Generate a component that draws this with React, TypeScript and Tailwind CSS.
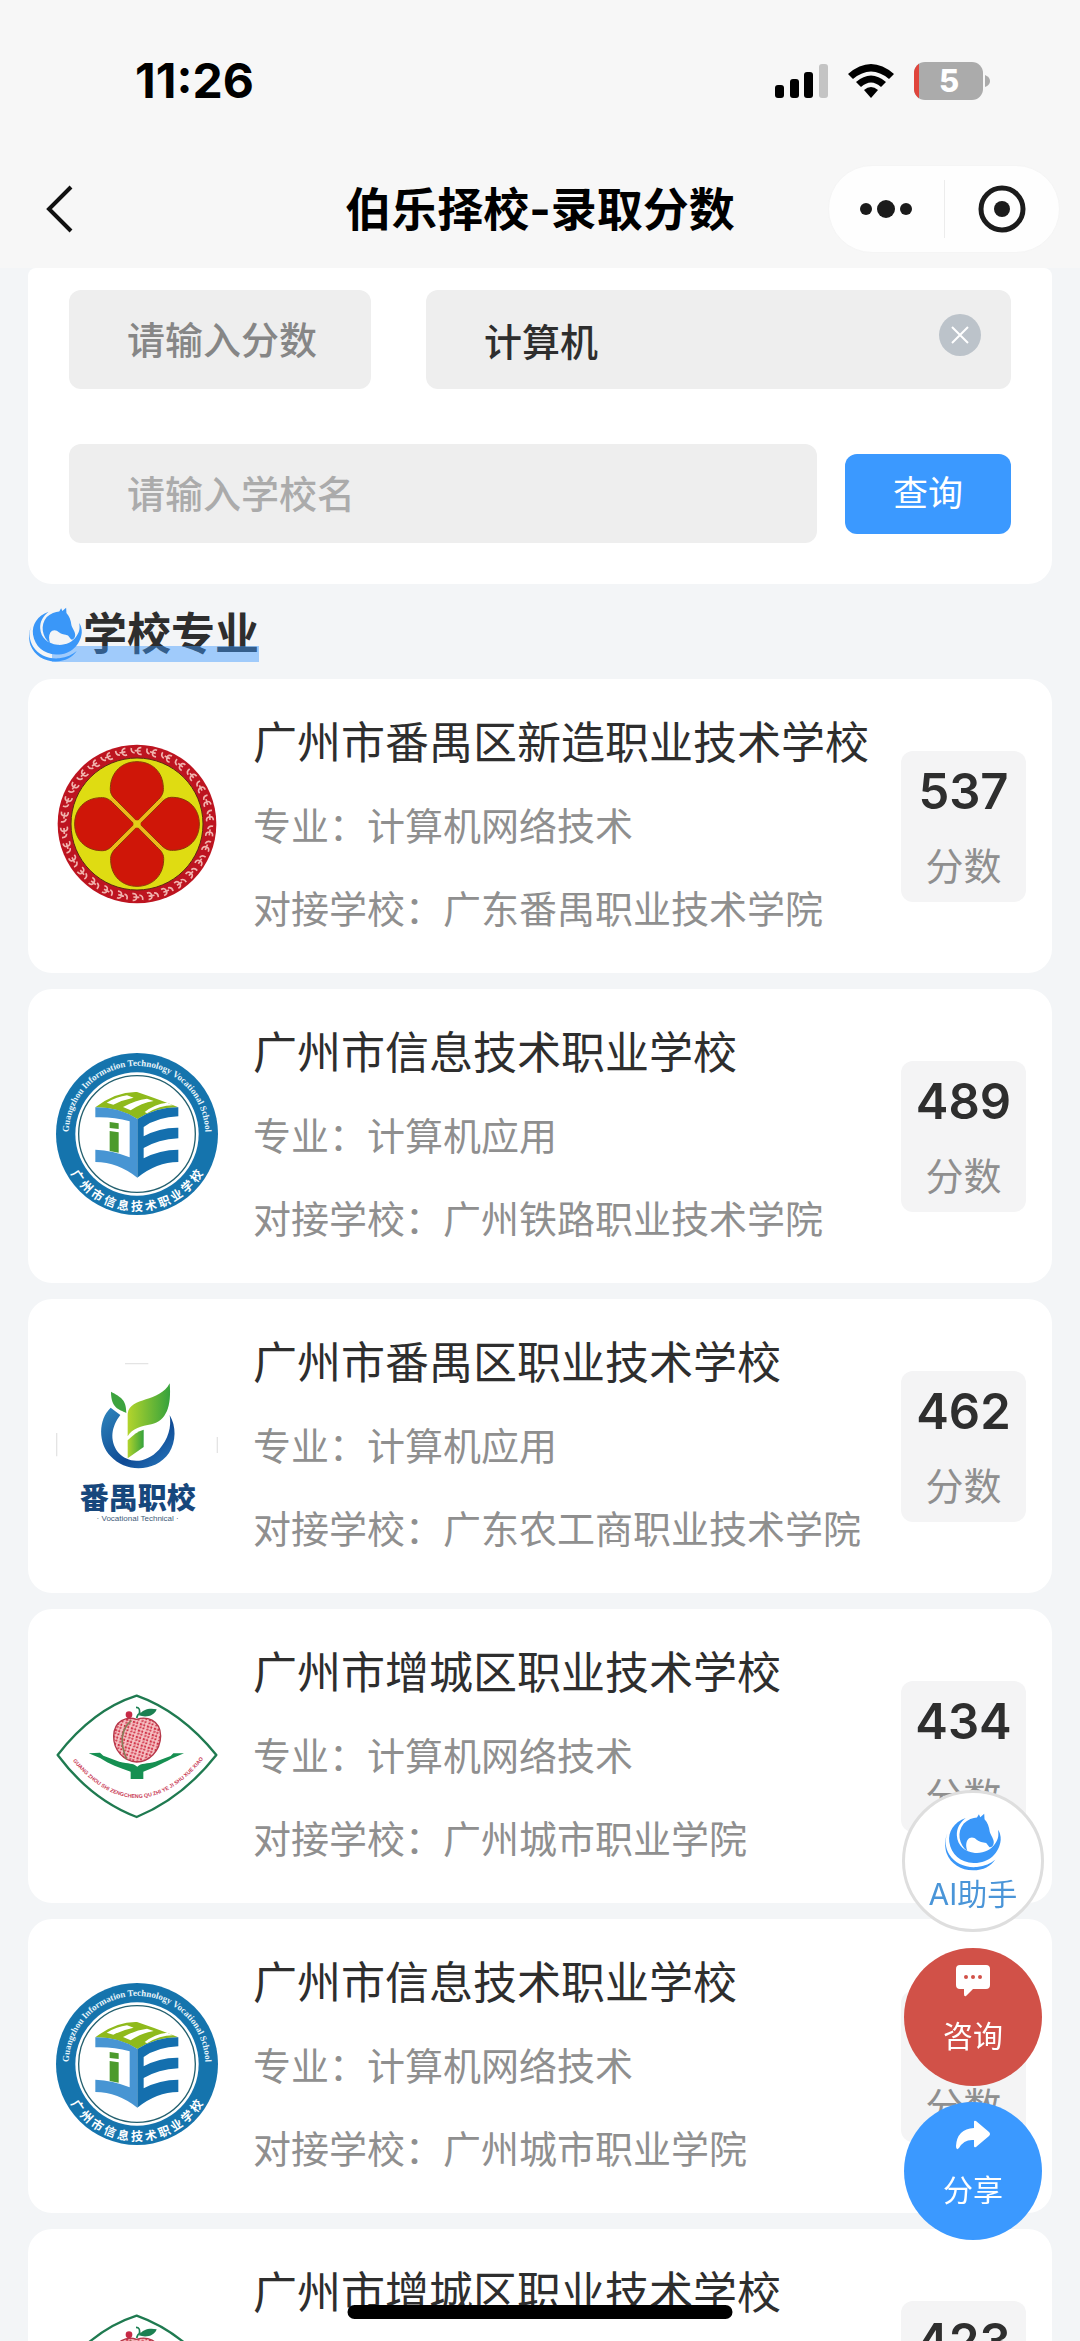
import React from "react";

type LogoKind = "xinzao" | "xinxi" | "panyu" | "zengcheng";

interface School {
  name: string;
  major: string;
  partner: string;
  score: number;
  logo: LogoKind;
}

const schools: School[] = [
  { name: "广州市番禺区新造职业技术学校", major: "计算机网络技术", partner: "广东番禺职业技术学院", score: 537, logo: "xinzao" },
  { name: "广州市信息技术职业学校", major: "计算机应用", partner: "广州铁路职业技术学院", score: 489, logo: "xinxi" },
  { name: "广州市番禺区职业技术学校", major: "计算机应用", partner: "广东农工商职业技术学院", score: 462, logo: "panyu" },
  { name: "广州市增城区职业技术学校", major: "计算机网络技术", partner: "广州城市职业学院", score: 434, logo: "zengcheng" },
  { name: "广州市信息技术职业学校", major: "计算机网络技术", partner: "广州城市职业学院", score: 433, logo: "xinxi" },
  { name: "广州市增城区职业技术学校", major: "计算机网络技术", partner: "广州城市职业学院", score: 423, logo: "zengcheng" },
];

function HorseIcon({ className }: { className: string }) {
  return (
    <svg viewBox="162 90 176 176" className={className} fill="#3a97f8" aria-hidden="true">
      <path d="M228 105C192 118 174 146 178 178C184 216 212 240 252 242C298 243 330 212 334 172Q335 154 326 141C328 158 328 166 318 182C304 204 280 213 256 211C226 207 203 190 201 158C200 137 210 119 228 105Z" />
      <path d="M172 152C164 172 166 196 178 216C196 244 228 257 262 254C286 251 304 243 318 231C304 251 282 264 250 264C214 264 182 244 170 212C164 194 164 170 172 152Z" />
      <path d="M233 206C207 186 200 148 222 122C234 110 250 105 262 104L268 94L272 103L284 92L285 109C294 118 299 132 301 148C304 158 314 170 313 180C312 190 306 195 300 194L290 181C280 178 268 178 261 171C253 162 240 162 234 171C227 182 229 194 233 206Z" />
    </svg>
  );
}

function XinzaoLogo() {
  const marks = Array.from({ length: 30 }, (_, i) => i * 12);
  const petal = "M321 365L262 305C245 290 240 280 241 264C243 216 277 186 321 186C365 186 399 216 400 264C401 280 396 290 380 305Z";
  return (
    <svg viewBox="78 130 486 486" className="size-full">
      <circle cx="321" cy="373" r="238" fill="#bd1420" />
      {marks.map((a) => (
        <g key={a} transform={`rotate(${a} 321 373)`} fill="none" stroke="#f0b3ae" strokeWidth="5">
          <path d="M304 145Q302 158 314 160M334 144Q322 143 322 154Q323 166 335 164M314 153L332 154" />
        </g>
      ))}
      <circle cx="321" cy="373" r="198" fill="#dfdc12" stroke="#5a2a12" strokeWidth="3" />
      {[0, 90, 180, 270].map((a) => (
        <path key={a} d={petal} transform={`rotate(${a} 321 373)`} fill="#cf1608" stroke="#8a3a08" strokeWidth="3" strokeLinejoin="round" />
      ))}
      <path d="M243 295L399 451M399 295L243 451" stroke="#f0b51c" strokeWidth="9" />
      <circle cx="321" cy="373" r="11" fill="#e3cf18" />
    </svg>
  );
}

function XinxiLogo({ id }: { id: string }) {
  return (
    <svg viewBox="79 100 486 486" className="size-full">
      <defs>
        <path id={`${id}-top`} d="M121 384A205 205 0 1 1 523 384" />
        <path id={`${id}-bottom`} d="M116 448A231 231 0 0 0 528 448" />
      </defs>
      <circle cx="322" cy="343" r="243" fill="#1574ad" />
      <circle cx="322" cy="343" r="185" fill="#fff" />
      <circle cx="322" cy="343" r="175" fill="none" stroke="#24606f" strokeWidth="4" />
      <text fill="#e9f5fb" fontSize="27" fontWeight="700" fontFamily='"Liberation Serif", serif'>
        <textPath href={`#${id}-top`} startOffset="50%" textAnchor="middle">
          Guangzhou Information Technology Vocational School
        </textPath>
      </text>
      <text fill="#fff" fontSize="36" fontWeight="700" fontFamily='"Noto Sans CJK SC", sans-serif'>
        <textPath href={`#${id}-bottom`} startOffset="50%" textAnchor="middle">
          广 州 市 信 息 技 术 职 业 学 校
        </textPath>
      </text>
      <path d="M197 263Q260 215 322 217Q390 240 446 263Q380 262 323 298Q265 262 197 263Z" fill="#8fba1c" />
      <path d="M231 249Q262 231 292 227L312 234Q280 240 251 255ZM280 262Q318 241 352 237L372 244Q335 250 303 272ZM345 277Q375 253 412 249L430 257Q390 257 352 281Z" fill="#fff" />
      <path d="M197 263Q270 262 323 298V474Q265 428 197 427V390Q250 392 300 413V305Q250 291 197 293Z" fill="#4795d3" />
      <path d="M323 298Q380 262 446 263V290Q385 292 342 322V350Q390 323 446 324V356Q385 360 342 385V416Q390 390 446 390V427Q380 428 323 474Z" fill="#146fae" />
      <path d="M240 307L267 311V328L240 325ZM240 334L267 338V399L240 394Z" fill="#4c9a2c" />
    </svg>
  );
}

function PanyuLogo() {
  return (
    <svg viewBox="79 70 486 486" className="size-full">
      <defs>
        <linearGradient id="leaf" x1="0" x2="1" y1="0" y2="0">
          <stop offset="0" stopColor="#b3d42c" />
          <stop offset="1" stopColor="#35a23c" />
        </linearGradient>
        <linearGradient id="ring" x1="0" x2="1" y1="0" y2="1">
          <stop offset="0" stopColor="#2f86bd" />
          <stop offset="0.6" stopColor="#0f4a94" />
          <stop offset="1" stopColor="#2a7cc0" />
        </linearGradient>
      </defs>
      <path d="M286 72H356M81 280V350M563 292V340" stroke="#e4e4e4" strokeWidth="4" />
      <path d="M243 204C205 240 205 310 243 350C290 402 380 396 418 340C440 305 440 260 420 226C426 262 416 298 388 330C348 372 298 374 265 338C238 300 246 260 272 226Z" fill="url(#ring)" />
      <path d="M244 156C272 172 290 178 290 220C268 208 244 206 244 156Z" fill="#3da33e" />
      <path d="M420 131C426 200 410 244 365 254C335 260 308 266 294 290V222C302 170 390 190 420 131Z" fill="url(#leaf)" />
      <path d="M294 302C310 286 325 274 342 270V322L294 356Z" fill="url(#leaf)" />
      <text x="324" y="507" textAnchor="middle" fontSize="87" fontWeight="900" fill="#17477c" fontFamily='"Noto Sans CJK SC", sans-serif'>
        番禺职校
      </text>
      <text x="324" y="544" textAnchor="middle" fontSize="24" fill="#3d5a78" fontFamily='"Liberation Sans", sans-serif'>
        · Vocational Technical ·
      </text>
    </svg>
  );
}

function ZengchengLogo({ id }: { id: string }) {
  return (
    <svg viewBox="80 45 486 486" className="size-full">
      <defs>
        <path id={`${id}-arc`} d="M108 280Q212 420 324 420Q440 418 544 274" />
        <pattern id={`${id}-skin`} width="22" height="20" patternUnits="userSpaceOnUse" patternTransform="rotate(18)">
          <rect width="22" height="20" fill="#f6c3c5" />
          <path d="M2 3L9 2L10 8L4 10ZM14 1L20 4L18 9L13 7ZM5 13L11 12L9 18L3 18ZM15 12L21 13L19 18L13 17Z" fill="#cf2b42" />
        </pattern>
      </defs>
      <path d="M322 113Q455 160 561 291Q460 420 322 477Q185 425 85 291Q190 155 322 113Z" fill="#fff" stroke="#1f7a50" strokeWidth="7" strokeLinejoin="round" />
      <path d="M322 184C350 174 393 184 394 234C393 280 358 312 322 312C284 311 252 276 253 234C254 188 292 174 322 184Z" fill={`url(#${id}-skin)`} stroke="#b5384a" strokeWidth="4" />
      <path d="M306 188C270 218 274 262 292 304" fill="none" stroke="#8a7a58" strokeWidth="5" />
      <circle cx="299" cy="170" r="10" fill="#c72a46" />
      <path d="M322 180Q324 168 334 164M320 148Q334 148 330 168" fill="none" stroke="#1c8052" strokeWidth="5" />
      <path d="M328 172C342 152 362 150 382 154C376 174 350 180 328 172Z" fill="#1c8052" />
      <path d="M178 286L212 284L222 293L270 311C300 318 310 314 324 326C336 314 352 318 378 311L424 294L432 286L464 286L436 298C410 310 376 330 342 341V363H304V341C270 330 240 318 212 300Z" fill="#169052" />
      <text fill="#c93a55" fontSize="16" fontWeight="700" fontFamily='"Liberation Sans", sans-serif'>
        <textPath href={`#${id}-arc`} startOffset="50%" textAnchor="middle">
          GUANG ZHOU SHI ZENGCHENG QU ZHI YE JI SHU XUE XIAO
        </textPath>
      </text>
    </svg>
  );
}

function Logo({ kind, id }: { kind: LogoKind; id: string }) {
  if (kind === "xinzao") return <XinzaoLogo />;
  if (kind === "xinxi") return <XinxiLogo id={id} />;
  if (kind === "panyu") return <PanyuLogo />;
  return <ZengchengLogo id={id} />;
}

function StatusBar() {
  return (
    <div className="flex h-[150px] items-center justify-between pt-3 pr-[90px] pl-[135px]">
      <span className="text-[48px] leading-none font-bold text-black">11:26</span>
      <div className="flex items-center gap-5">
        <svg viewBox="0 0 53 35" className="h-[35px] w-[53px]" aria-label="信号">
          <rect x="0" y="21" width="9" height="13" rx="3" />
          <rect x="15" y="15" width="9" height="19" rx="3" />
          <rect x="29" y="8" width="9" height="26" rx="3" />
          <rect x="44" y="0" width="9" height="34" rx="3" fill="#c4c4c4" />
        </svg>
        <svg viewBox="0 0 46 34" className="h-[34px] w-[46px]" aria-label="无线网络">
          <path d="M0 10Q23 -10 46 10L41 15Q23 0 5 15Z" />
          <path d="M8 18Q23 5 38 18L33 23Q23 14 13 23Z" />
          <path d="M16 26Q23 20 30 26L23 34Z" />
        </svg>
        <svg viewBox="0 0 76 38" className="h-[38px] w-[76px]" aria-label="电量 5%">
          <defs>
            <clipPath id="battery">
              <rect width="69" height="38" rx="11" />
            </clipPath>
          </defs>
          <g clipPath="url(#battery)">
            <rect width="69" height="38" fill="#ababab" />
            <rect width="5" height="38" fill="#e0453c" />
          </g>
          <path d="M71 13Q76 15 76 19Q76 23 71 25Z" fill="#ababab" />
          <text x="35" y="30" textAnchor="middle" fontSize="31" fontWeight="800" fill="#fff">
            5
          </text>
        </svg>
      </div>
    </div>
  );
}

function NavBar() {
  return (
    <div className="grid h-[118px] grid-cols-[1fr_auto_1fr] items-center px-5">
      <button type="button" aria-label="返回" className="flex h-16 w-20 items-center pl-[22px]">
        <svg viewBox="0 0 36 48" className="h-12 w-9" fill="none" stroke="#111" strokeWidth="4">
          <path d="M29 2L7 24L29 46" />
        </svg>
      </button>
      <h1 className="text-[46px] leading-none font-bold text-black">伯乐择校-录取分数</h1>
      <div className="flex h-[88px] w-[232px] items-center justify-self-end rounded-full border border-[#f5f5f5] bg-[#fefefe]">
        <button type="button" aria-label="更多" className="flex flex-1 justify-center">
          <svg viewBox="0 0 52 20" className="h-5 w-[52px]" fill="#1b1b1b">
            <circle cx="6" cy="10" r="6" />
            <circle cx="26" cy="10" r="9" />
            <circle cx="46" cy="10" r="6" />
          </svg>
        </button>
        <span className="h-[58px] w-px bg-[#ececec]" />
        <button type="button" aria-label="关闭" className="flex flex-1 justify-center">
          <svg viewBox="0 0 48 48" className="size-12" fill="none" stroke="#1b1b1b">
            <circle cx="24" cy="24" r="21" strokeWidth="5" />
            <circle cx="24" cy="24" r="8" fill="#1b1b1b" stroke="none" />
          </svg>
        </button>
      </div>
    </div>
  );
}

function SearchPanel() {
  return (
    <form className="flex flex-col gap-[55px] rounded-t-lg rounded-b-3xl bg-white px-[41px] pt-[22px] pb-[41px]" onSubmit={(e) => e.preventDefault()}>
      <div className="flex gap-[55px]">
        <input
          aria-label="分数"
          placeholder="请输入分数"
          className="h-[99px] w-[302px] rounded-xl bg-[#eeeeee] pl-[58px] text-[38px] font-medium text-[#2e2e2e] outline-none placeholder:text-[#868686]"
        />
        <div className="relative min-w-0 flex-1">
          <input
            aria-label="专业"
            defaultValue="计算机"
            className="h-[99px] w-full rounded-xl bg-[#eeeeee] px-[58px] text-[38px] font-medium text-[#2e2e2e] outline-none"
          />
          <button type="button" aria-label="清除" className="absolute top-6 right-[30px] flex size-[42px] items-center justify-center rounded-full bg-[#bcc3ca]">
            <svg viewBox="0 0 18 18" className="size-[18px]" fill="none" stroke="#fff" strokeWidth="2">
              <path d="M1 1L17 17M17 1L1 17" />
            </svg>
          </button>
        </div>
      </div>
      <div className="flex items-center gap-7">
        <input
          aria-label="学校名"
          placeholder="请输入学校名"
          className="h-[99px] min-w-0 flex-1 rounded-xl bg-[#eeeeee] pl-[58px] text-[38px] font-medium text-[#2e2e2e] outline-none placeholder:text-[#ababab]"
        />
        <button type="submit" className="h-20 w-[166px] rounded-xl bg-[#3b99ff] text-[35px] leading-none text-white">
          查询
        </button>
      </div>
    </form>
  );
}

function SchoolCard({ school, id }: { school: School; id: string }) {
  return (
    <li className="flex h-[294px] items-center rounded-3xl bg-white pr-[26px] pl-7">
      <div className="mr-[35px] mb-1 size-[162px] shrink-0">
        <Logo kind={school.logo} id={id} />
      </div>
      <div className="min-w-0 flex-1 whitespace-nowrap">
        <h3 className="text-[44px] leading-[83px] text-[#2e2e2e]">{school.name}</h3>
        <p className="text-[38px] leading-[83px] text-[#8f8f8f]">专业：{school.major}</p>
        <p className="text-[38px] leading-[83px] text-[#8f8f8f]">对接学校：{school.partner}</p>
      </div>
      <div className="flex h-[151px] w-[125px] shrink-0 flex-col items-center rounded-xl bg-[#f4f4f5] pt-1">
        <span className="text-[49px] leading-[74px] font-semibold text-[#2e2e2e]">{school.score}</span>
        <span className="text-[38px] leading-[74px] text-[#8f8f8f]">分数</span>
      </div>
    </li>
  );
}

function FloatingActions() {
  return (
    <div className="fixed right-9 bottom-[101px] flex flex-col items-center gap-4">
      <button type="button" className="flex size-[142px] flex-col items-center rounded-full border-[3px] border-[#dedede] bg-white pt-5 text-[30px] text-[#4a95d8]">
        <HorseIcon className="size-[58px]" />
        <span className="leading-[46px]">AI助手</span>
      </button>
      <button type="button" className="flex size-[138px] flex-col items-center gap-4 rounded-full bg-[#d15148] pt-[17px] text-[30px] text-white">
        <svg viewBox="0 0 34 32" className="h-8 w-[34px]">
          <path d="M4 0H30Q34 0 34 4V20Q34 24 30 24H17L10 31Q8 32 8 29V24H4Q0 24 0 20V4Q0 0 4 0Z" fill="#fff" />
          <g fill="#d15148">
            <circle cx="10" cy="12" r="2" />
            <circle cx="17" cy="12" r="2" />
            <circle cx="24" cy="12" r="2" />
          </g>
        </svg>
        <span className="leading-[46px]">咨询</span>
      </button>
      <button type="button" className="flex size-[138px] flex-col items-center gap-4 rounded-full bg-[#3b99ff] pt-[17px] text-[30px] text-white">
        <svg viewBox="0 0 34 32" className="h-8 w-[34px]" fill="#fff">
          <path d="M18 3Q18 1 20 2L33 13Q35 15 33 17L20 28Q18 29 18 27V21Q8 20 3 29Q0 32 0 27Q1 10 18 9Z" />
        </svg>
        <span className="leading-[46px]">分享</span>
      </button>
    </div>
  );
}

export default function App() {
  return (
    <div className="flex h-screen flex-col overflow-hidden bg-[#f3f5f7] font-[Inter,'Noto_Sans_CJK_SC',sans-serif]" lang="zh-CN">
      <header className="shrink-0 bg-[#f7f7f7]">
        <StatusBar />
        <NavBar />
      </header>
      <main className="min-h-0 flex-1 overflow-hidden px-7">
        <SearchPanel />
        <div className="flex pt-[22px] pb-[17px]">
          <div className="relative flex h-14 items-center">
            <HorseIcon className="size-[55px]" />
            <h2 className="text-[44px] leading-[56px] font-bold text-[#2e2e2e]">学校专业</h2>
            <span className="absolute right-0 bottom-0 left-6 h-4 bg-[#3b99ff]/45" />
          </div>
        </div>
        <ul className="flex flex-col gap-4">
          {schools.map((school, i) => (
            <SchoolCard key={i} school={school} id={`logo-${i}`} />
          ))}
        </ul>
      </main>
      <FloatingActions />
      <div className="fixed bottom-[22px] left-1/2 h-3.5 w-[385px] -translate-x-1/2 rounded-full bg-black" />
    </div>
  );
}
